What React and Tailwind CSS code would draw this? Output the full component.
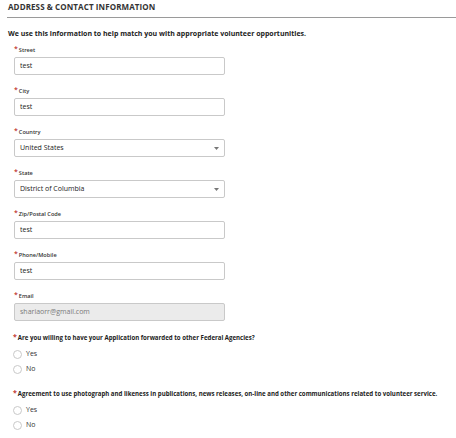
import React from "react";

const font = { fontFamily: '"Open Sans", "Liberation Sans", sans-serif' };

function Label({ children }) {
  return (
    <div className="h-[7px] flex items-start text-[5.6px] leading-[7px] text-[#333] font-semibold">
      <span className="text-[#c23934] text-[7px] leading-[5px] mr-[1px] -mt-[1px]">*</span>
      <span>{children}</span>
    </div>
  );
}

function TextInput({ label, value, disabled }) {
  return (
    <div className="mb-[13px]">
      <Label>{label}</Label>
      <div
        className={
          "mt-[3px] w-[211px] h-[18px] border border-[#c9c9c9] rounded-[2px] flex items-center pl-[5px] text-[7px] font-medium " +
          (disabled ? "bg-[#ebebeb] text-[#7a7a7a]" : "bg-white text-[#222]")
        }
      >
        {value}
      </div>
    </div>
  );
}

function SelectInput({ label, value }) {
  return (
    <div className="mb-[13px]">
      <Label>{label}</Label>
      <div className="mt-[3px] w-[211px] h-[18px] border border-[#c9c9c9] rounded-[2px] flex items-center justify-between pl-[5px] pr-[5px] text-[7px] font-medium text-[#222] bg-white">
        <span>{value}</span>
        <svg width="5" height="3" viewBox="0 0 5 3">
          <path d="M0 0 L5 0 L2.5 3 Z" fill="#777" />
        </svg>
      </div>
    </div>
  );
}

function Radio({ label }) {
  return (
    <div className="h-[15px] flex items-center">
      <span className="w-[9px] h-[9px] rounded-full border border-[#c9c9c9] bg-white"></span>
      <span className="ml-[4px] text-[7px] text-[#333]">{label}</span>
    </div>
  );
}

function Question({ children }) {
  return (
    <div className="flex items-start text-[6.1px] leading-[8px] font-bold text-[#222]">
      <span className="text-[#c23934] text-[7px] leading-[6px] mr-[1px]">*</span>
      <span>{children}</span>
    </div>
  );
}

export default function App() {
  return (
    <div className="w-[456px] h-[438px] bg-white overflow-hidden" style={font}>
      <div className="ml-[7px] pl-[1px] pt-[2px] pb-[5px] border-b border-[#9a9a9a] text-[8px] leading-[10px] font-bold text-[#333] tracking-[0.1px]">
        ADDRESS &amp; CONTACT INFORMATION
      </div>
      <div className="ml-[8px] mt-[11px] text-[7px] leading-[10px] font-bold text-[#222]">
        We use this information to help match you with appropriate volunteer opportunities.
      </div>
      <div className="ml-[14px] mt-[8px]">
        <TextInput label="Street" value="test" />
        <TextInput label="City" value="test" />
        <SelectInput label="Country" value="United States" />
        <SelectInput label="State" value="District of Columbia" />
        <TextInput label="Zip/Postal Code" value="test" />
        <TextInput label="Phone/Mobile" value="test" />
        <TextInput label="Email" value="shariaorr@gmail.com" disabled />
      </div>
      <div className="ml-[13px] mt-[1px]">
        <Question>Are you willing to have your Application forwarded to other Federal Agencies?</Question>
        <div className="mt-[5px]">
          <Radio label="Yes" />
          <Radio label="No" />
        </div>
        <div className="mt-[13px]">
          <Question>
            Agreement to use photograph and likeness in publications, news releases, on-line and other communications related to volunteer service.
          </Question>
        </div>
        <div className="mt-[5px]">
          <Radio label="Yes" />
          <Radio label="No" />
        </div>
      </div>
    </div>
  );
}
